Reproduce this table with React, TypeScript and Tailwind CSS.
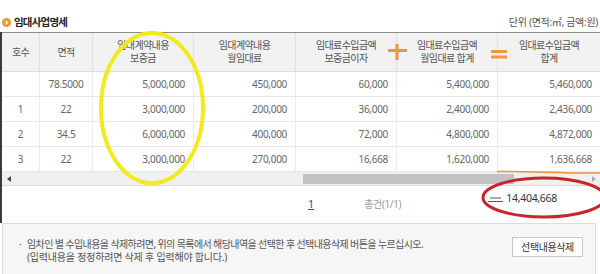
import React from "react";

const headers: string[][] = [
  ["호수"],
  ["면적"],
  ["임대계약내용", "보증금"],
  ["임대계약내용", "월임대료"],
  ["임대료수입금액", "보증금이자"],
  ["임대료수입금액", "월임대료 합계"],
  ["임대료수입금액", "합계"],
];

const rows: string[][] = [
  ["", "78.5000", "5,000,000", "450,000", "60,000", "5,400,000", "5,460,000"],
  ["1", "22", "3,000,000", "200,000", "36,000", "2,400,000", "2,436,000"],
  ["2", "34.5", "6,000,000", "400,000", "72,000", "4,800,000", "4,872,000"],
  ["3", "22", "3,000,000", "270,000", "16,668", "1,620,000", "1,636,668"],
];

const cols = "grid grid-cols-[38px_53px_101px_102px_101px_101px_102px]";

function Bullet() {
  return (
    <svg width="9" height="9" viewBox="0 0 9 9">
      <circle cx="4.5" cy="4.5" r="4.5" fill="#e39a32" />
      <path d="M3.6 2.6 L5.5 4.5 L3.6 6.4" stroke="#fff" strokeWidth="1.3" fill="none" />
    </svg>
  );
}

export default function App() {
  return (
    <div className="relative w-[600px] h-[274px] overflow-hidden bg-white font-['Noto_Sans','Noto_Sans_CJK_KR',sans-serif]">
      {/* Title */}
      <div className="flex h-[32px] items-start justify-between pt-[15px] pl-[2px] pr-[2px] leading-[14px]">
        <div className="flex items-center gap-[3px]">
          <Bullet />
          <span className="text-[10.5px] font-bold tracking-[-0.8px] text-[#222]">임대사업명세</span>
        </div>
        <span className="text-[10px] tracking-[-0.3px] text-[#555]">단위 (면적:㎡, 금액:원)</span>
      </div>

      {/* Table */}
      <div className="border-l-2 border-[#3a3a3a]">
        <div className={`${cols} h-[40px] border-t border-b border-t-[#8c8c8c] border-b-[#dcdcdc] bg-[#f2f2f2]`}>
          {headers.map((h, i) => (
            <div
              key={i}
              className={`flex flex-col items-center justify-center text-[10px] leading-[13px] tracking-[-0.6px] text-[#555] ${
                i < headers.length - 1 ? "border-r border-[#e2e2e2]" : ""
              }`}
            >
              {h.map((t) => (
                <span key={t}>{t}</span>
              ))}
            </div>
          ))}
        </div>

        {rows.map((r, ri) => (
          <div key={ri} className={`${cols} h-[25px] border-b border-[#e8e8e8]`}>
            {r.map((v, ci) => (
              <div
                key={ci}
                className={`flex items-center text-[10px] tracking-[-0.3px] text-[#666] ${
                  ci < 2 ? "justify-center" : "justify-end pr-[8px]"
                } ${ci < r.length - 1 ? "border-r border-[#ececec]" : ""}`}
              >
                {v}
              </div>
            ))}
          </div>
        ))}

        {/* Scrollbar */}
        <div className="flex h-[14px] items-center border-b border-[#dcdcdc] bg-[#f0f0f0]">
          <span className="ml-[5px] h-0 w-0 border-y-[3px] border-r-[4px] border-y-transparent border-r-[#444]" />
          <div className="ml-[292px] h-[10px] w-[211px] bg-[#c2c2c2]" />
          <span className="ml-auto mr-[4px] h-0 w-0 border-y-[3px] border-l-[4px] border-y-transparent border-l-[#aaa]" />
        </div>

        {/* Paging */}
        <div className="flex h-[37px] items-center">
          <span className="ml-[306px] text-[11px] text-[#a02828] underline">1</span>
          <span className="ml-[50px] text-[10px] tracking-[-0.4px] text-[#999]">총건(1/1)</span>
          <span className="ml-auto mr-[43px] -mt-[12px] text-[10.5px] tracking-[-0.3px] text-[#333]">14,404,668</span>
        </div>
      </div>

      {/* Notice */}
      <div className="ml-[2px] mr-[4px] flex h-[60px] items-start justify-between border border-[#dcdcdc] bg-[#f6f6f6] pt-[14px]">
        <div className="flex pl-[16px] text-[10px] leading-[13px] tracking-[-0.6px] text-[#555]">
          <span className="w-[8px]">·</span>
          <div className="flex flex-col">
            <span>임차인 별 수입내용을 삭제하려면, 위의 목록에서 해당내역을 선택한 후 선택내용삭제 버튼을 누르십시오.</span>
            <span className="tracking-[-0.2px]">(입력내용을 정정하려면 삭제 후 입력해야 합니다.)</span>
          </div>
        </div>
        <button className="mr-[12px] mt-[-1px] h-[20px] w-[71px] border border-[#c8c8c8] bg-white text-[10px] tracking-[-0.4px] text-[#333]">
          선택내용삭제
        </button>
      </div>

      {/* Hand-drawn annotations */}
      <svg className="pointer-events-none absolute left-0 top-0" width="600" height="274" viewBox="0 0 600 274">
        <ellipse cx="152" cy="108" rx="51" ry="75" fill="none" stroke="#f2ea1c" strokeWidth="4" />
        <path d="M388 50.5 H407 M397 44 V60" stroke="#f2963a" strokeWidth="3" fill="none" />
        <path d="M491 51.5 H507 M491 57 H507" stroke="#f2963a" strokeWidth="3" fill="none" />
        <path d="M497 171.5 C 530 171, 560 173.5, 600 173" stroke="#ef8f3a" strokeWidth="1.5" fill="none" />
        <ellipse cx="544" cy="197.5" rx="61" ry="19.5" fill="none" stroke="#c9232b" strokeWidth="3" />
        <path d="M490 198 H501 M488 201.5 H503" stroke="#555" strokeWidth="1" fill="none" />
      </svg>
    </div>
  );
}
